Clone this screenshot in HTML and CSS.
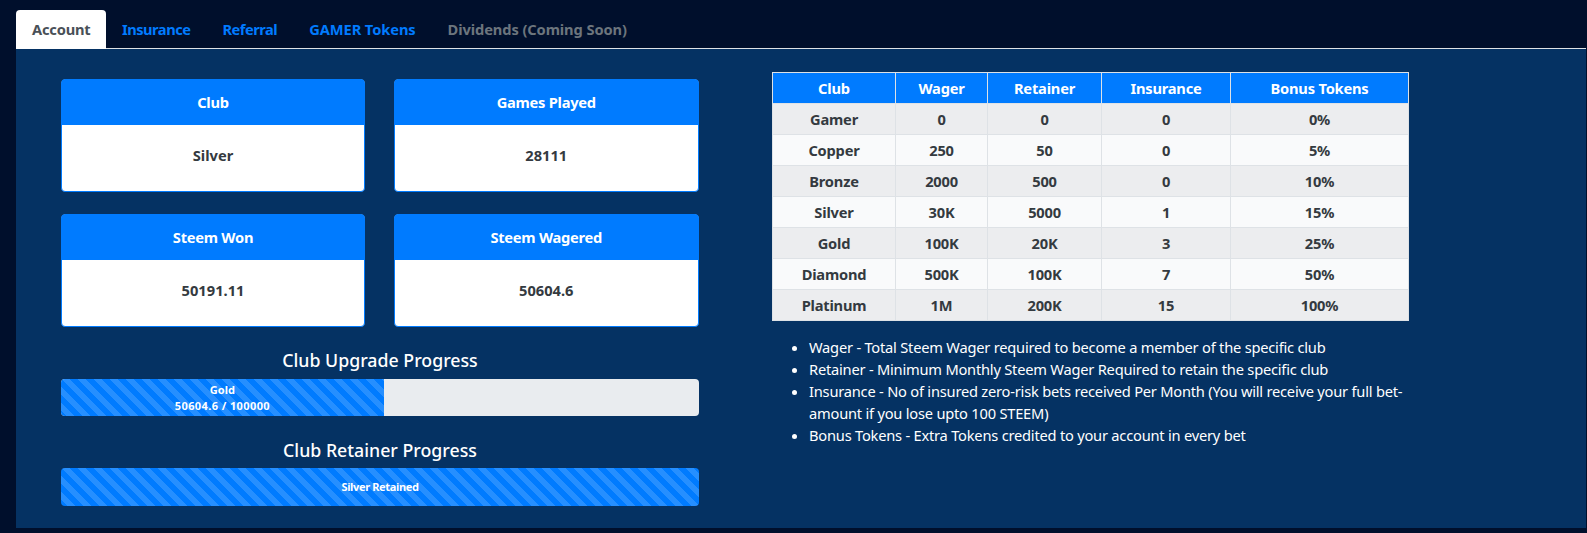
FILE: index.html
```html
<!DOCTYPE html>
<html lang="en">
<head>
  <meta charset="UTF-8">
  <meta name="viewport" content="width=device-width, initial-scale=1.0">
  <title>Account</title>
  <link rel="stylesheet" href="styles.css">
</head>
<body>
  <ul class="tabs">
    <li class="tab active">Account</li>
    <li class="tab">Insurance</li>
    <li class="tab">Referral</li>
    <li class="tab caps">GAMER Tokens</li>
    <li class="tab caps disabled">Dividends (Coming Soon)</li>
  </ul>

  <div class="panel">
    <div class="left">
      <div class="cards">
        <div class="card">
          <div class="card-head">Club</div>
          <div class="card-body">Silver</div>
        </div>
        <div class="card">
          <div class="card-head">Games Played</div>
          <div class="card-body">28111</div>
        </div>
        <div class="card">
          <div class="card-head">Steem Won</div>
          <div class="card-body">50191.11</div>
        </div>
        <div class="card">
          <div class="card-head">Steem Wagered</div>
          <div class="card-body">50604.6</div>
        </div>
      </div>

      <h5 class="progress-title">Club Upgrade Progress</h5>
      <div class="progress">
        <div class="progress-bar" style="width: 50.6%">Gold<br><span class="amount">50604.6 / 100000</span></div>
      </div>

      <h5 class="progress-title lower">Club Retainer Progress</h5>
      <div class="progress tall">
        <div class="progress-bar" style="width: 100%"><span class="retained">Silver Retained</span></div>
      </div>
    </div>

    <div class="right">
      <table class="clubs">
        <thead>
          <tr><th class="c1">Club</th><th class="c2">Wager</th><th class="c3">Retainer</th><th class="c4">Insurance</th><th>Bonus Tokens</th></tr>
        </thead>
        <tbody>
          <tr><td>Gamer</td><td>0</td><td>0</td><td>0</td><td>0%</td></tr>
          <tr><td>Copper</td><td>250</td><td>50</td><td>0</td><td>5%</td></tr>
          <tr><td>Bronze</td><td>2000</td><td>500</td><td>0</td><td>10%</td></tr>
          <tr><td>Silver</td><td>30K</td><td>5000</td><td>1</td><td>15%</td></tr>
          <tr><td>Gold</td><td>100K</td><td>20K</td><td>3</td><td>25%</td></tr>
          <tr><td>Diamond</td><td>500K</td><td>100K</td><td>7</td><td>50%</td></tr>
          <tr><td>Platinum</td><td>1M</td><td>200K</td><td>15</td><td>100%</td></tr>
        </tbody>
      </table>

      <ul class="notes">
        <li>Wager - Total Steem Wager required to become a member of the specific club</li>
        <li>Retainer - Minimum Monthly Steem Wager Required to retain the specific club</li>
        <li>Insurance - No of insured zero-risk bets received Per Month (You will receive your full bet-amount if you lose upto 100 STEEM)</li>
        <li>Bonus Tokens - Extra Tokens credited to your account in every bet</li>
      </ul>
    </div>
  </div>
</body>
</html>
```

FILE: styles.css
```css
* {
  margin: 0;
  padding: 0;
  box-sizing: border-box;
}

body {
  font-family: "Noto Sans", "Open Sans", sans-serif;
  font-size: 14.67px;
  line-height: 22px;
  background: #000f2c;
  height: 533px;
  overflow: hidden;
  padding: 10px 1px 0 16px;
}

/* Tabs */
.tabs {
  display: flex;
  list-style: none;
  height: 39px;
  border-bottom: 1px solid #dee2e6;
}

.tab {
  height: 39px;
  padding: 8px 16px;
  font-weight: 700;
  letter-spacing: -0.5px;
  color: #007bff;
  border-radius: 4px 4px 0 0;
}

.tab.caps {
  letter-spacing: -0.1px;
}

.tab.active {
  width: 90px;
  letter-spacing: -0.2px;
  text-align: center;
  color: #495057;
  background: #fff;
}

.tab.disabled {
  color: #6c757d;
}

/* Panel */
.panel {
  display: flex;
  height: 479px;
  background: #053263;
  padding: 23px 0 0 45px;
}

.left {
  width: 638px;
  padding-top: 7px;
}

.cards {
  display: grid;
  grid-template-columns: 304px 304.5px;
  column-gap: 29px;
  row-gap: 22px;
}

.card {
  height: 113px;
  background: #fff;
  border: 1px solid #007bff;
  border-radius: 4px;
  text-align: center;
  font-weight: 700;
  color: #343a40;
}

.card-head {
  height: 45px;
  padding-top: 11px;
  background: #007bff;
  color: #fff;
  letter-spacing: -0.25px;
}

.card-body {
  padding-top: 19px;
}

.progress-title {
  margin-top: 20px;
  height: 32px;
  font-size: 17.75px;
  line-height: 26px;
  font-weight: 500;
  color: #fff;
  text-align: center;
}

.progress-title.lower {
  padding-top: 1px;
}

.progress {
  height: 37px;
  background: #e9ecef;
  border-radius: 4px;
  overflow: hidden;
}

.progress.tall {
  height: 38px;
}

.progress-bar {
  height: 100%;
  display: flex;
  flex-direction: column;
  justify-content: center;
  text-align: center;
  color: #fff;
  font-size: 11px;
  line-height: 16px;
  font-weight: 700;
  background-color: #007bff;
  background-image: linear-gradient(45deg, rgba(255,255,255,.15) 25%, transparent 25%, transparent 50%, rgba(255,255,255,.15) 50%, rgba(255,255,255,.15) 75%, transparent 75%, transparent);
  background-size: 16px 16px;
}

.amount {
  letter-spacing: 0.4px;
}

.retained {
  letter-spacing: -0.35px;
}

/* Table */
.right {
  width: 637px;
  margin-left: 73px;
}

.clubs {
  width: 637px;
  border-collapse: collapse;
  table-layout: fixed;
  text-align: center;
  font-weight: 700;
  color: #343a40;
  letter-spacing: -0.2px;
}

.clubs th,
.clubs td {
  height: 31px;
  padding: 0;
  border: 1px solid #dee2e6;
}

.clubs th {
  background: #007bff;
  color: #fff;
}

.clubs .c1 { width: 123px; }
.clubs .c2 { width: 92px; }
.clubs .c3 { width: 114px; }
.clubs .c4 { width: 129px; }

.clubs tbody tr:nth-child(odd) {
  background: #ecedef;
}

.clubs tbody tr:nth-child(even) {
  background: #f9fafb;
}

.notes {
  margin-top: 15px;
  padding-left: 37px;
  color: #fff;
  letter-spacing: -0.22px;
}
```
